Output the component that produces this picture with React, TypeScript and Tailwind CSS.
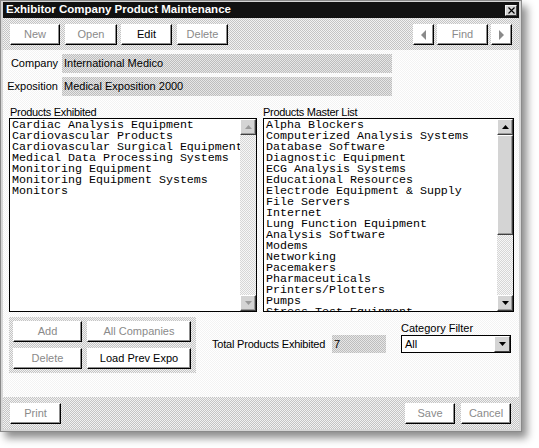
import React from 'react';

const ui = "font-['Liberation_Sans',Arial,sans-serif]";
const mono = "font-['Liberation_Mono','DejaVu_Sans_Mono',monospace]";
const dither = 'bg-[image:repeating-conic-gradient(#c4c4c4_0_25%,#f2f2f2_0_50%)] bg-[length:2px_2px]';
const ditherField = 'bg-[image:repeating-conic-gradient(#bdbdbd_0_25%,#e6e6e6_0_50%)] bg-[length:2px_2px]';
const ditherBody = 'bg-[image:repeating-conic-gradient(#f3f3f3_0_25%,#ffffff_0_50%)] bg-[length:2px_2px]';
const ditherTrack = 'bg-[image:repeating-conic-gradient(#d6d6d6_0_25%,#f7f7f7_0_50%)] bg-[length:2px_2px]';

const exhibited = [
  'Cardiac Analysis Equipment',
  'Cardiovascular Products',
  'Cardiovascular Surgical Equipment',
  'Medical Data Processing Systems',
  'Monitoring Equipment',
  'Monitoring Equipment Systems',
  'Monitors',
];

const master = [
  'Alpha Blockers',
  'Computerized Analysis Systems',
  'Database Software',
  'Diagnostic Equipment',
  'ECG Analysis Systems',
  'Educational Resources',
  'Electrode Equipment & Supply',
  'File Servers',
  'Internet',
  'Lung Function Equipment',
  'Analysis Software',
  'Modems',
  'Networking',
  'Pacemakers',
  'Pharmaceuticals',
  'Printers/Plotters',
  'Pumps',
  'Stress Test Equipment',
];

function Btn({ label, w, disabled, className = '' }: { label: React.ReactNode; w: string; disabled?: boolean; className?: string }) {
  return (
    <div
      className={`${w} h-[21px] flex items-center justify-center bg-white border-t border-l border-white border-r border-b border-r-black border-b-black shadow-[inset_-1px_-1px_0_#8c8c8c] text-[11px] leading-none ${
        disabled ? 'text-[#8a8a8a]' : 'text-black'
      } ${className}`}
    >
      {label}
    </div>
  );
}

function Tri({ dir, color }: { dir: 'up' | 'down' | 'left' | 'right'; color: string }) {
  const pts = {
    up: '0,4 7,4 3.5,0',
    down: '0,0 7,0 3.5,4',
    left: '5,0 5,10 0,5',
    right: '0,0 0,10 5,5',
  }[dir];
  const horiz = dir === 'left' || dir === 'right';
  return (
    <svg width={horiz ? 5 : 7} height={horiz ? 10 : 4} viewBox={horiz ? '0 0 5 10' : '0 0 7 4'}>
      <polygon points={pts} fill={color} />
    </svg>
  );
}

function ScrollBtn({ dir, disabled }: { dir: 'up' | 'down'; disabled?: boolean }) {
  return (
    <div className="h-[16px] w-[16px] flex items-center justify-center bg-[#d4d4d4] border-t border-l border-white border-r border-b border-r-[#404040] border-b-[#404040] shadow-[inset_-1px_-1px_0_#9a9a9a]">
      <Tri dir={dir} color={disabled ? '#9a9a9a' : '#000'} />
    </div>
  );
}

function ListBox({ items, w, active }: { items: string[]; w: string; active?: boolean }) {
  return (
    <div className={`${w} h-[194px] flex border border-black bg-white overflow-hidden`}>
      <div className={`flex-1 overflow-hidden pl-[2px] pt-[1px] ${mono} text-[11.67px] leading-[11px] text-black whitespace-nowrap`}>
        {items.map((it) => (
          <div key={it} className="h-[11px]">{it}</div>
        ))}
      </div>
      <div className={`w-[16px] flex flex-col ${ditherTrack}`}>
        <ScrollBtn dir="up" disabled={!active} />
        {active ? (
          <div className="h-[100px] w-[16px] bg-[#d4d4d4] border-t border-l border-white border-r border-b border-r-[#404040] border-b-[#404040] shadow-[inset_-1px_-1px_0_#9a9a9a]" />
        ) : null}
        <div className="flex-1" />
        <ScrollBtn dir="down" disabled={!active} />
      </div>
    </div>
  );
}

export default function App() {
  return (
    <div className={`w-[539px] h-[448px] bg-white ${ui}`}>
      <div className="w-[522px] h-[432px] flex flex-col border border-[#8a8a8a] bg-[#d6d6d6] px-[2px] pt-[1px] pb-[2px] shadow-[5px_6px_8px_rgba(0,0,0,0.45)]">
        {/* title bar */}
        <div className="h-[16px] flex items-center justify-between bg-[#111111] pl-[3px] pr-[2px]">
          <span className="text-white font-bold text-[11.5px] leading-none">Exhibitor Company Product Maintenance</span>
          <div className="w-[12px] h-[11px] flex items-center justify-center bg-[#d4d4d4] border border-[#f4f4f4] border-r-[#404040] border-b-[#404040]">
            <svg width="7" height="7" viewBox="0 0 7 7">
              <path d="M0.5 0.5 L6.5 6.5 M6.5 0.5 L0.5 6.5" stroke="#000" strokeWidth="1.2" />
            </svg>
          </div>
        </div>

        {/* toolbar */}
        <div className={`h-[32px] flex items-start pt-[6px] px-[7px] ${dither}`}>
          <Btn label="New" w="w-[50px]" disabled />
          <Btn label="Open" w="w-[52px]" disabled className="ml-[5px]" />
          <Btn label="Edit" w="w-[51px]" className="ml-[4px]" />
          <Btn label="Delete" w="w-[51px]" disabled className="ml-[5px]" />
          <div className="flex-1" />
          <Btn label={<Tri dir="left" color="#8a8a8a" />} w="w-[21px]" />
          <Btn label="Find" w="w-[51px]" disabled className="ml-[3px]" />
          <Btn label={<Tri dir="right" color="#8a8a8a" />} w="w-[21px]" className="ml-[3px]" />
        </div>

        {/* body */}
        <div className={`h-[347px] flex flex-col ${ditherBody} text-[11px] text-black`}>
          <div className="flex flex-col gap-[4px] pt-[4px]">
            <div className="flex items-center">
              <span className="w-[55px] text-right leading-none">Company</span>
              <div className={`ml-[4px] w-[330px] h-[19px] flex items-center pl-[2px] ${ditherField}`}>International Medico</div>
            </div>
            <div className="flex items-center">
              <span className="w-[55px] text-right leading-none">Exposition</span>
              <div className={`ml-[4px] w-[330px] h-[19px] flex items-center pl-[2px] ${ditherField}`}>Medical Exposition 2000</div>
            </div>
          </div>

          <div className="flex pl-[7px] mt-[7px] h-[15px] items-end leading-none tracking-[-0.3px]">
            <span className="w-[253px]">Products Exhibited</span>
            <span>Products Master List</span>
          </div>
          <div className="flex pl-[6px] gap-[6px]">
            <ListBox items={exhibited} w="w-[248px]" />
            <ListBox items={master} w="w-[251px]" active />
          </div>

          <div className="flex pl-[6px] pt-[5px]">
            <div className={`w-[187px] h-[56px] p-[4px] grid grid-cols-[69px_104px] gap-[5px] ${dither}`}>
              <Btn label="Add" w="w-[69px]" disabled />
              <Btn label="All Companies" w="w-[104px]" disabled />
              <Btn label="Delete" w="w-[69px]" disabled />
              <Btn label="Load Prev Expo" w="w-[104px]" />
            </div>
            <div className="ml-[16px] pt-[18px] flex items-center h-[18px] box-content">
              <span className="w-[120px] leading-none whitespace-nowrap tracking-[-0.2px]">Total Products Exhibited</span>
              <div className={`w-[54px] h-[18px] flex items-center pl-[2px] ${ditherField}`}>7</div>
            </div>
            <div className="ml-[15px] pt-[4px] flex flex-col">
              <span className="h-[14px] leading-none flex items-center">Category Filter</span>
              <div className="w-[110px] h-[18px] flex items-center border border-black bg-white">
                <span className="flex-1 pl-[3px] leading-none">All</span>
                <div className="w-[16px] h-[16px] flex items-center justify-center bg-[#d4d4d4] border-t border-l border-white border-r border-b border-r-[#404040] border-b-[#404040]">
                  <Tri dir="down" color="#000" />
                </div>
              </div>
            </div>
          </div>
        </div>

        {/* footer */}
        <div className={`h-[32px] flex items-start pt-[6px] pl-[7px] pr-[8px] ${dither}`}>
          <Btn label="Print" w="w-[51px]" disabled />
          <div className="flex-1" />
          <Btn label="Save" w="w-[50px]" disabled />
          <Btn label="Cancel" w="w-[50px]" disabled className="ml-[6px]" />
        </div>
      </div>
    </div>
  );
}
